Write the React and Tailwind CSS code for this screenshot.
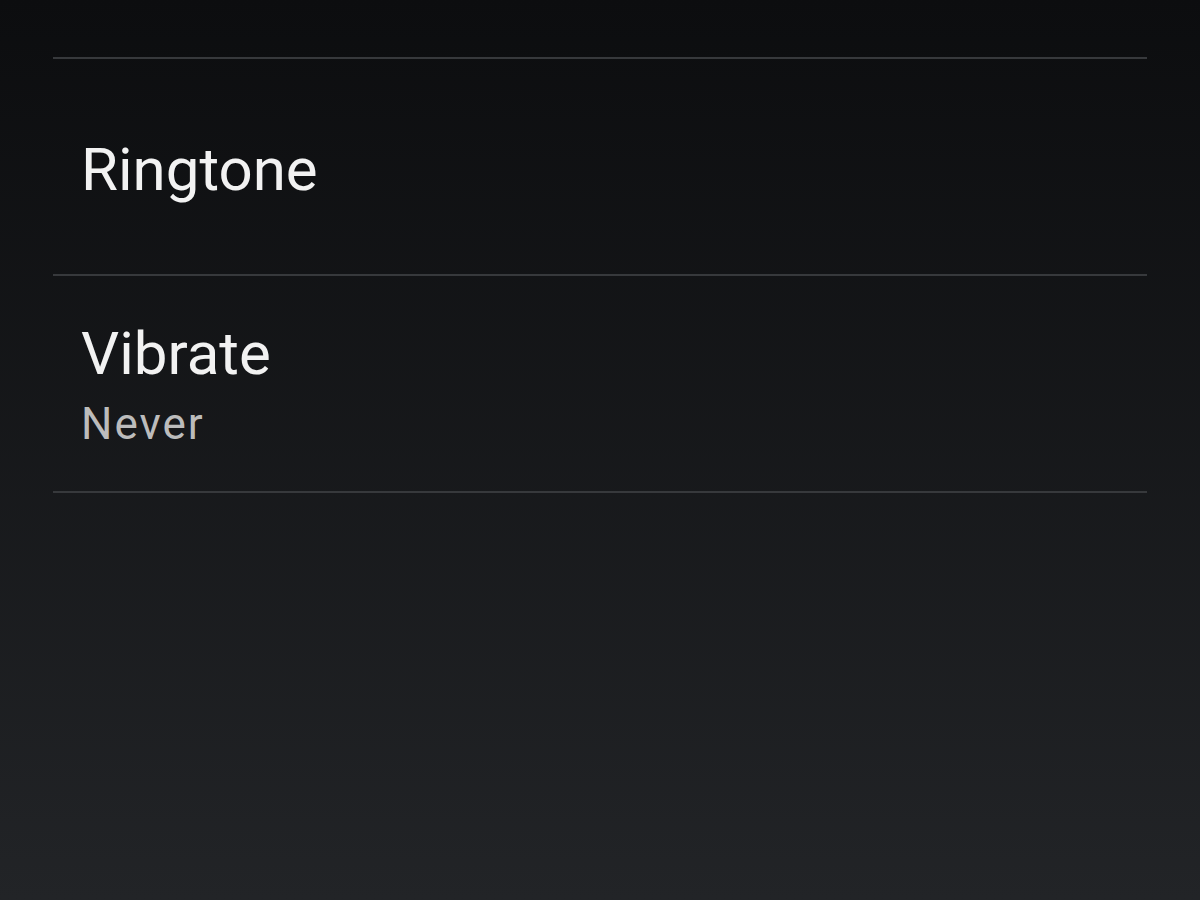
const rows = [
  { title: 'Ringtone' },
  { title: 'Vibrate', summary: 'Never' },
];

function Divider() {
  return <div className="h-[2px] bg-[#37393c]" />;
}

export default function App() {
  return (
    <div
      className="h-[900px] w-[1200px] overflow-hidden bg-gradient-to-b from-[#0c0d0f] to-[#222427] px-[53px] pt-[57px]"
      style={{ fontFamily: 'Roboto, "Noto Sans", sans-serif' }}
    >
      <Divider />
      {rows.map((row) => (
        <div key={row.title}>
          <div
            className={
              row.summary
                ? 'flex h-[215px] flex-col justify-center pl-[28px]'
                : 'flex h-[215px] flex-col justify-center pl-[28px] pt-[6px]'
            }
          >
            <div className="text-[60px] leading-[72px] text-[#f2f2f2]">{row.title}</div>
            {row.summary && (
              <div className="mt-[8px] text-[44px] leading-[52px] tracking-[2px] text-[#bcbcbc]">
                {row.summary}
              </div>
            )}
          </div>
          <Divider />
        </div>
      ))}
    </div>
  );
}
